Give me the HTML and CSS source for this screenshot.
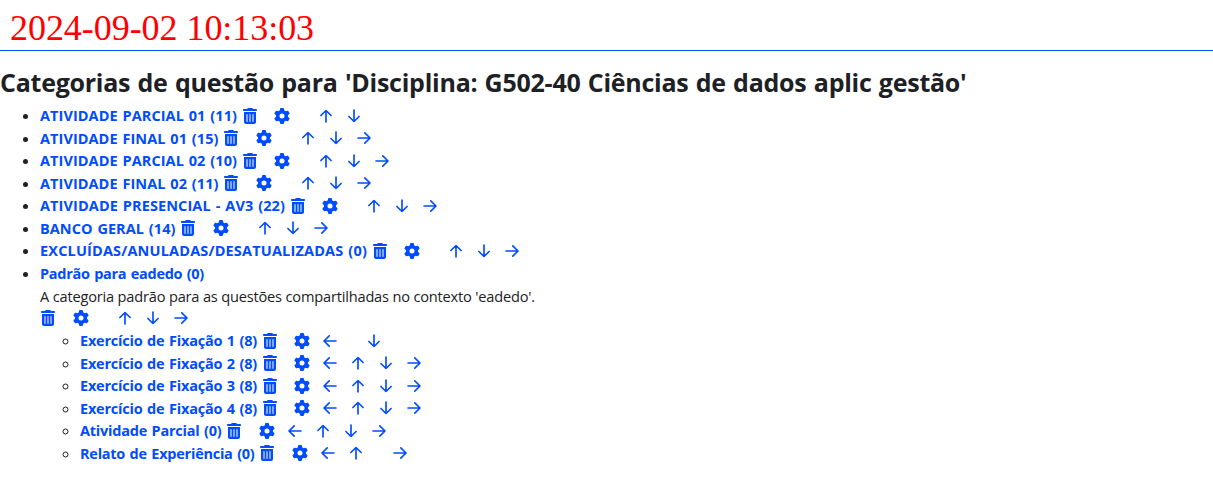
FILE: index.html
```html
<!DOCTYPE html>
<html lang="pt-br">
<head>
<meta charset="utf-8">
<title>Categorias de questão</title>
<link rel="stylesheet" href="styles.css">
</head>
<body>
<svg class="sprite" aria-hidden="true">
  <symbol id="trash" viewBox="0 0 448 512"><path d="M135.2 17.7L128 32H32C14.3 32 0 46.3 0 64S14.3 96 32 96H416c17.7 0 32-14.3 32-32s-14.3-32-32-32H320l-7.2-14.3C307.4 6.8 296.3 0 284.2 0H163.8c-12.1 0-23.2 6.8-28.6 17.7zM416 128H32V448c0 35.3 28.7 64 64 64H352c35.3 0 64-28.7 64-64V128zM144 208V432c0 8.8-7.2 16-16 16s-16-7.2-16-16V208c0-8.8 7.2-16 16-16s16 7.2 16 16zm96 0V432c0 8.8-7.2 16-16 16s-16-7.2-16-16V208c0-8.8 7.2-16 16-16s16 7.2 16 16zm96 0V432c0 8.8-7.2 16-16 16s-16-7.2-16-16V208c0-8.8 7.2-16 16-16s16 7.2 16 16z"/></symbol>
  <symbol id="gear" viewBox="0 0 512 512"><path d="M495.9 166.6c3.2 8.7 .5 18.4-6.4 24.6l-43.3 39.4c1.1 8.3 1.7 16.8 1.7 25.4s-.6 17.1-1.7 25.4l43.3 39.4c6.9 6.2 9.6 15.9 6.4 24.6c-4.4 11.9-9.7 23.3-15.8 34.3l-4.7 8.1c-6.6 11-14 21.4-22.1 31.2c-5.9 7.2-15.7 9.6-24.5 6.8l-55.7-17.7c-13.4 10.3-28.2 18.9-44 25.4l-12.5 57.1c-2 9.1-9 16.3-18.2 17.8c-13.8 2.3-28 3.5-42.5 3.5s-28.7-1.2-42.5-3.5c-9.2-1.5-16.2-8.7-18.2-17.8l-12.5-57.1c-15.8-6.5-30.6-15.1-44-25.4L83.1 425.9c-8.8 2.8-18.6 .3-24.5-6.8c-8.1-9.8-15.5-20.2-22.1-31.2l-4.7-8.1c-6.1-11-11.4-22.4-15.8-34.3c-3.2-8.7-.5-18.4 6.4-24.6l43.3-39.4C64.6 273.1 64 264.6 64 256s.6-17.1 1.7-25.4L22.4 191.2c-6.9-6.2-9.6-15.9-6.4-24.6c4.4-11.9 9.7-23.3 15.8-34.3l4.7-8.1c6.6-11 14-21.4 22.1-31.2c5.9-7.2 15.7-9.6 24.5-6.8l55.7 17.7c13.4-10.3 28.2-18.9 44-25.4l12.5-57.1c2-9.1 9-16.3 18.2-17.8C227.3 1.2 241.5 0 256 0s28.7 1.2 42.5 3.5c9.2 1.5 16.2 8.7 18.2 17.8l12.5 57.1c15.8 6.5 30.6 15.1 44 25.4l55.7-17.7c8.8-2.8 18.6-.3 24.5 6.8c8.1 9.8 15.5 20.2 22.1 31.2l4.7 8.1c6.1 11 11.4 22.4 15.8 34.3zM256 336a80 80 0 1 0 0-160 80 80 0 1 0 0 160z"/></symbol>
  <symbol id="up" viewBox="0 0 16 16"><path class="stroke" d="M8 14V2.6M2.9 7.5 8 2.5l5.1 5"/></symbol>
  <symbol id="down" viewBox="0 0 16 16"><path class="stroke" d="M8 2v11.4M2.9 8.5 8 13.5l5.1-5"/></symbol>
  <symbol id="left" viewBox="0 0 16 16"><path class="stroke" d="M14 8H2.3M7.2 2.9 2 8l5.2 5.1"/></symbol>
  <symbol id="right" viewBox="0 0 16 16"><path class="stroke" d="M2 8h11.7M8.8 2.9 14 8l-5.2 5.1"/></symbol>
</svg>
<header class="stamp">2024-09-02 10:13:03</header>
<h2 class="title"><span class="fit" data-width="966.5">Categorias de questão para 'Disciplina: G502-40 Ciências de dados aplic gestão'</span></h2>
<ul class="tree" id="tree"></ul>
<script src="app.js"></script>
</body>
</html>
```

FILE: styles.css
```css
body {
  margin: 0;
  background: #fff;
  color: #1d2125;
  font-family: "Open Sans", "Noto Sans", sans-serif;
  font-size: 15px;
  line-height: 22.5px;
}
.sprite { display: none; }
.stamp {
  box-sizing: border-box;
  height: 51px;
  padding: 8px 10px 0;
  border-bottom: 1px solid #004cff;
  color: #f00;
  font: 36px/40px "Liberation Serif", serif;
  letter-spacing: -0.05px;
}
.title {
  margin: 15px 0 5.5px;
  font-size: 25px;
  font-weight: 700;
  line-height: 33px;
  height: 33px;
  white-space: nowrap;
  word-spacing: 1px;
}
.tree, .subtree { margin: 0; padding-left: 40px; line-height: 18px; }
.tree { list-style: disc; }
.subtree { list-style: circle; }
.row { display: flex; align-items: center; height: 22.5px; white-space: nowrap; }
.name { padding-top: 1px; color: #004cff; font-weight: 700; font-size: 14.5px; text-decoration: none; word-spacing: 1px; }
.fit { display: inline-block; }
.info { height: 22.5px; font-size: 14.6px; line-height: 22.5px; white-space: nowrap; }
.actions { display: flex; align-items: center; height: 22.5px; color: #004cff; }
.cell { display: flex; justify-content: center; width: 28px; }
.cell.trash { width: 25px; margin-right: 6px; }
.gap { width: 16px; }
.icon { width: 16px; height: 16px; fill: currentColor; }
.stroke { fill: none; stroke: currentColor; stroke-width: 1.65; stroke-linecap: round; stroke-linejoin: round; }
.alone { margin: -0.5px 0 0.5px -4.5px; }
```

FILE: app.js
```js
const categories = [
  { name: "ATIVIDADE PARCIAL 01 (11)", width: 197, moves: "-ud" },
  { name: "ATIVIDADE FINAL 01 (15)", width: 178.5, moves: "-udr" },
  { name: "ATIVIDADE PARCIAL 02 (10)", width: 197, moves: "-udr" },
  { name: "ATIVIDADE FINAL 02 (11)", width: 178.5, moves: "-udr" },
  { name: "ATIVIDADE PRESENCIAL - AV3 (22)", width: 245, moves: "-udr" },
  { name: "BANCO GERAL (14)", width: 135.5, moves: "-udr" },
  { name: "EXCLUÍDAS/ANULADAS/DESATUALIZADAS (0)", width: 327, moves: "-udr" },
  {
    name: "Padrão para eadedo (0)", width: 164, moves: "-udr",
    info: "A categoria padrão para as questões compartilhadas no contexto 'eadedo'.",
    infoWidth: 495,
    children: [
      { name: "Exercício de Fixação 1 (8)", width: 177, moves: "l-d" },
      { name: "Exercício de Fixação 2 (8)", width: 177, moves: "ludr" },
      { name: "Exercício de Fixação 3 (8)", width: 177, moves: "ludr" },
      { name: "Exercício de Fixação 4 (8)", width: 177, moves: "ludr" },
      { name: "Atividade Parcial (0)", width: 141.5, moves: "ludr" },
      { name: "Relato de Experiência (0)", width: 174.5, moves: "lu-r" }
    ]
  }
];
const arrows = { l: "left", u: "up", d: "down", r: "right" };
const cell = id => `<span class="cell ${id}"><svg class="icon"><use href="#${id}"/></svg></span>`;
const actions = (item, extra = "") =>
  `<div class="actions ${extra}">${cell("trash")}${cell("gear")}` +
  [...item.moves].map(m => m === "-" ? '<span class="gap"></span>' : cell(arrows[m])).join("") + "</div>";
const label = item => `<a class="name"><span class="fit" data-width="${item.width}">${item.name}</span></a>`;
const render = item => item.info
  ? `<li><div class="row">${label(item)}</div>
     <div class="info"><span class="fit" data-width="${item.infoWidth}">${item.info}</span></div>
     ${actions(item, "alone")}<ul class="subtree">${item.children.map(render).join("")}</ul></li>`
  : `<li><div class="row">${label(item)}${actions(item)}</div></li>`;
document.getElementById("tree").innerHTML = categories.map(render).join("");

document.querySelectorAll(".fit").forEach(el => {
  const extra = (el.dataset.width - el.getBoundingClientRect().width) / el.textContent.length;
  el.style.letterSpacing = extra + "px";
});
```
